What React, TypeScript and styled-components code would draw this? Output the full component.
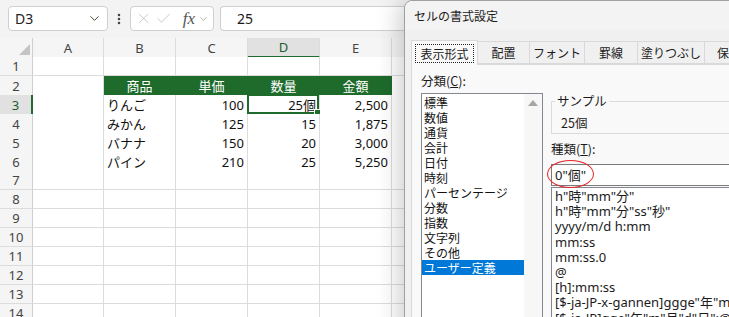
import React from "react";
import styled, { createGlobalStyle } from "styled-components";
import { ChevronDown, EllipsisVertical, X, Check } from "lucide-react";

const GREEN = "#1e6b2c";
const GRID = "#dcdcdc";
const COLS = "33px 71px 72px 72px 72px 72px 72px 72px";

const GlobalStyle = createGlobalStyle`
  html, body { margin: 0; padding: 0; }
  body {
    background: #f3f3f3;
    font-family: "Noto Sans CJK JP", "Noto Sans", sans-serif;
    color: #1b1b1b;
  }
  * { box-sizing: border-box; }
`;

const Page = styled.div`
  position: relative;
  width: 729px;
  height: 317px;
  overflow: hidden;
  background: #f3f3f3;
`;

/* formula bar */
const FormulaBar = styled.div`
  display: flex;
  align-items: flex-start;
  height: 38px;
  padding: 6px 0 0 8px;
`;

const Field = styled.div`
  display: flex;
  align-items: center;
  height: 25px;
  background: #fff;
  border: 1px solid #cfcfcf;
  border-radius: 4px;
`;

const NameBox = styled(Field)`
  width: 100px;
  justify-content: space-between;
  padding: 0 5px 0 6px;
  font-family: "Noto Sans", sans-serif;
  font-size: 14px;
  color: #222;
`;

const Dots = styled.div`
  display: flex;
  justify-content: center;
  align-items: center;
  width: 22px;
  height: 25px;
  color: #444;
`;

const EditBox = styled(Field)`
  width: 84px;
  padding: 0 4px 0 4px;
  gap: 3px;
  color: #b8b8b8;
`;

const Fx = styled.span`
  font-family: "Liberation Serif", serif;
  font-style: italic;
  font-size: 17px;
  color: #555;
  margin-left: 7px;
`;

const FormulaInput = styled(Field)`
  flex: 1;
  margin-left: 6px;
  padding-left: 16px;
  font-family: "Noto Sans", sans-serif;
  font-size: 14px;
  border-right: none;
  border-radius: 4px 0 0 4px;
`;

/* sheet */
const Sheet = styled.div`
  display: flex;
  flex-direction: column;
`;

const Row = styled.div<{ $h: number }>`
  display: grid;
  grid-template-columns: ${COLS};
  height: ${(p) => p.$h}px;
`;

const HeadCell = styled.div<{ $sel?: boolean }>`
  display: flex;
  align-items: center;
  justify-content: center;
  font-family: "Noto Sans", sans-serif;
  font-size: 13px;
  color: ${(p) => (p.$sel ? "#1b5e2a" : "#444")};
  background: ${(p) => (p.$sel ? "#e1e1e1" : "#f5f5f5")};
  border-right: 1px solid ${GRID};
  border-bottom: ${(p) => (p.$sel ? `2px solid ${GREEN}` : `1px solid #cfcfcf`)};
`;

const RowHead = styled.div<{ $sel?: boolean }>`
  display: flex;
  align-items: center;
  justify-content: center;
  font-family: "Noto Sans", sans-serif;
  font-size: 13px;
  color: ${(p) => (p.$sel ? "#1b5e2a" : "#444")};
  background: ${(p) => (p.$sel ? "#e1e1e1" : "#f5f5f5")};
  border-bottom: 1px solid ${GRID};
  border-right: ${(p) => (p.$sel ? `2px solid ${GREEN}` : `1px solid #cfcfcf`)};
`;

const Corner = styled.div`
  display: flex;
  align-items: flex-end;
  justify-content: flex-end;
  padding: 0 2px 2px 0;
  background: #f5f5f5;
  border-right: 1px solid #cfcfcf;
  border-bottom: 1px solid #cfcfcf;
`;

const Cell = styled.div<{ $align?: "left" | "right" | "center"; $head?: boolean }>`
  position: relative;
  display: flex;
  align-items: center;
  justify-content: ${(p) =>
    p.$align === "right" ? "flex-end" : p.$align === "center" ? "center" : "flex-start"};
  padding: 0 3px;
  font-family: "Noto Sans", "Noto Sans CJK JP", sans-serif;
  font-size: 13px;
  white-space: nowrap;
  background: ${(p) => (p.$head ? GREEN : "#fff")};
  color: ${(p) => (p.$head ? "#fff" : "#111")};
  border-right: 1px solid ${(p) => (p.$head ? GREEN : GRID)};
  border-bottom: 1px solid ${(p) => (p.$head ? GREEN : GRID)};
`;

const Selection = styled.div`
  position: absolute;
  inset: -1px 0 0 -1px;
  border: 2px solid ${GREEN};
  pointer-events: none;
`;

const FillHandle = styled.div`
  position: absolute;
  right: -4px;
  bottom: -4px;
  width: 7px;
  height: 7px;
  background: ${GREEN};
  border: 1px solid #fff;
`;

/* dialog */
const Dialog = styled.div`
  position: absolute;
  left: 404px;
  top: 0;
  width: 360px;
  height: 380px;
  display: flex;
  flex-direction: column;
  background: #f0f0f0;
  border: 1px solid #a0a0a0;
  border-top-left-radius: 8px;
  box-shadow: -6px 0 22px rgba(0, 0, 0, 0.18);
  font-family: "Noto Sans CJK JP", sans-serif;
  font-size: 12px;
`;

const TitleBar = styled.div`
  flex-shrink: 0;
  display: flex;
  align-items: center;
  height: 29px;
  padding-left: 9px;
  background: #f3f3f3;
  border-top-left-radius: 8px;
`;

const TabStrip = styled.div`
  flex-shrink: 0;
  display: flex;
  align-items: flex-end;
  height: 34px;
  padding-left: 6px;
`;

const Tab = styled.div<{ $w: number; $active?: boolean }>`
  display: flex;
  align-items: center;
  justify-content: center;
  width: ${(p) => p.$w}px;
  height: ${(p) => (p.$active ? 25 : 23)}px;
  margin-bottom: ${(p) => (p.$active ? -1 : 0)}px;
  position: relative;
  z-index: ${(p) => (p.$active ? 1 : 0)};
  background: ${(p) => (p.$active ? "#f9f9f9" : "#f0f0f0")};
  border: 1px solid #d9d9d9;
  border-bottom: ${(p) => (p.$active ? "none" : "1px solid #d9d9d9")};
  margin-left: ${(p) => (p.$active ? 0 : -1)}px;
  white-space: nowrap;
`;

const FocusText = styled.span`
  padding: 0 4px;
  line-height: 17px;
  outline: 1px dotted #222;
`;

const Panel = styled.div`
  flex: 1;
  display: flex;
  margin-left: 6px;
  padding: 7px 0 0 9px;
  background: #f9f9f9;
  border: 1px solid #d9d9d9;
`;

const LeftCol = styled.div`
  display: flex;
  flex-direction: column;
  width: 122px;
`;

const RightCol = styled.div`
  display: flex;
  flex-direction: column;
  margin-left: 8px;
  width: 200px;
`;

const Label = styled.div<{ $gap?: number }>`
  line-height: 17px;
  height: 17px;
  font-size: 12.5px;
  margin-top: ${(p) => p.$gap ?? 0}px;
`;

const ListBox = styled.div`
  display: flex;
  margin-top: 4px;
  height: 240px;
  background: #fff;
  border: 1px solid #828790;
`;

const Items = styled.div`
  flex: 1;
  padding: 1px 0 0 0;
`;

const Item = styled.div<{ $sel?: boolean }>`
  height: 15px;
  line-height: 15px;
  padding-left: 2px;
  font-size: 12px;
  white-space: nowrap;
  background: ${(p) => (p.$sel ? "#0078d7" : "transparent")};
  color: ${(p) => (p.$sel ? "#fff" : "#111")};
`;

const ScrollTrack = styled.div`
  width: 18px;
  display: flex;
  justify-content: center;
  padding-top: 6px;
  background: #f7f7f7;
`;

const Group = styled.fieldset`
  margin: 21px 0 0 0;
  padding: 0 0 0 3px;
  height: 41px;
  border: 1px solid #dcdcdc;
`;

const Legend = styled.legend`
  padding: 0 2px;
  line-height: 16px;
  font-size: 12.5px;
`;

const Sample = styled.div`
  padding: 3px 0 0 6px;
  line-height: 22px;
  font-size: 12.5px;
`;

const InputWrap = styled.div`
  position: relative;
  margin-top: 7px;
`;

const TextInput = styled.div`
  height: 22px;
  line-height: 20px;
  padding-left: 3px;
  background: #fff;
  border: 1px solid #7a7a7a;
  font-family: "Noto Sans", "Noto Sans CJK JP", sans-serif;
  font-size: 13px;
`;

const RedRing = styled.div`
  position: absolute;
  left: -4px;
  top: -4px;
  width: 47px;
  height: 28px;
  border: 1.5px solid #e8262a;
  border-radius: 50%;
`;

const FormatList = styled.div`
  margin-top: 1px;
  height: 160px;
  padding: 1px 0 0 3px;
  background: #fff;
  border: 1px solid #828790;
  font-family: "Noto Sans", "Noto Sans CJK JP", sans-serif;
`;

const FormatItem = styled.div`
  height: 15.2px;
  line-height: 15px;
  font-size: 13px;
  white-space: nowrap;
`;

const letters = ["A", "B", "C", "D", "E", "F", "G"];

type CellData = { v: string; a?: "left" | "right" | "center" };

const data: (CellData[] | null)[] = [
  null,
  [
    { v: "商品", a: "center" },
    { v: "単価", a: "center" },
    { v: "数量", a: "center" },
    { v: "金額", a: "center" },
  ],
  [{ v: "りんご" }, { v: "100", a: "right" }, { v: "25個", a: "right" }, { v: "2,500", a: "right" }],
  [{ v: "みかん" }, { v: "125", a: "right" }, { v: "15", a: "right" }, { v: "1,875", a: "right" }],
  [{ v: "バナナ" }, { v: "150", a: "right" }, { v: "20", a: "right" }, { v: "3,000", a: "right" }],
  [{ v: "パイン" }, { v: "210", a: "right" }, { v: "25", a: "right" }, { v: "5,250", a: "right" }],
];

const categories = [
  "標準",
  "数値",
  "通貨",
  "会計",
  "日付",
  "時刻",
  "パーセンテージ",
  "分数",
  "指数",
  "文字列",
  "その他",
  "ユーザー定義",
];

const formats = [
  'h"時"mm"分"',
  'h"時"mm"分"ss"秒"',
  "yyyy/m/d h:mm",
  "mm:ss",
  "mm:ss.0",
  "@",
  "[h]:mm:ss",
  '[$-ja-JP-x-gannen]ggge"年"m"月"d"日"',
  '[$-ja-JP]gge"年"m"月"d"日";@',
];

const tabs = [
  { label: "表示形式", w: 67 },
  { label: "配置", w: 53 },
  { label: "フォント", w: 56 },
  { label: "罫線", w: 54 },
  { label: "塗りつぶし", w: 68 },
  { label: "保護", w: 50 },
];

const SheetGrid = () => (
  <Sheet>
    <Row $h={19}>
      <Corner>
        <svg width="11" height="11" viewBox="0 0 11 11">
          <polygon points="11,0 11,11 0,11" fill="#c4c4c4" />
        </svg>
      </Corner>
      {letters.map((l) => (
        <HeadCell key={l} $sel={l === "D"}>
          {l}
        </HeadCell>
      ))}
    </Row>
    {Array.from({ length: 14 }, (_, r) => {
      const rowData = data[r];
      const isHead = r === 1;
      return (
        <Row $h={19} key={r}>
          <RowHead $sel={r === 2}>{r + 1}</RowHead>
          {letters.map((l, c) => {
            const d = rowData && c >= 1 && c <= 4 ? rowData[c - 1] : undefined;
            const selected = r === 2 && l === "D";
            return (
              <Cell key={l} $align={d?.a} $head={isHead && c >= 1 && c <= 4}>
                {d?.v}
                {selected && (
                  <Selection>
                    <FillHandle />
                  </Selection>
                )}
              </Cell>
            );
          })}
        </Row>
      );
    })}
  </Sheet>
);

const FormatDialog = () => (
  <Dialog>
    <TitleBar>セルの書式設定</TitleBar>
    <TabStrip>
      {tabs.map((t, i) => (
        <Tab key={t.label} $w={t.w} $active={i === 0}>
          {i === 0 ? <FocusText>{t.label}</FocusText> : t.label}
        </Tab>
      ))}
    </TabStrip>
    <Panel>
      <LeftCol>
        <Label>
          分類(<u>C</u>):
        </Label>
        <ListBox>
          <Items>
            {categories.map((c) => (
              <Item key={c} $sel={c === "ユーザー定義"}>
                {c}
              </Item>
            ))}
          </Items>
          <ScrollTrack>
            <svg width="10" height="6" viewBox="0 0 10 6">
              <polygon points="5,0 10,6 0,6" fill="#a6a6a6" />
            </svg>
          </ScrollTrack>
        </ListBox>
      </LeftCol>
      <RightCol>
        <Group>
          <Legend>サンプル</Legend>
          <Sample>25個</Sample>
        </Group>
        <Label $gap={6}>
          種類(<u>T</u>):
        </Label>
        <InputWrap>
          <TextInput>0"個"</TextInput>
          <RedRing />
        </InputWrap>
        <FormatList>
          {formats.map((f) => (
            <FormatItem key={f}>{f}</FormatItem>
          ))}
        </FormatList>
      </RightCol>
    </Panel>
  </Dialog>
);

const App: React.FC = () => (
  <>
    <GlobalStyle />
    <Page>
      <FormulaBar>
        <NameBox>
          D3
          <ChevronDown size={15} strokeWidth={1.6} color="#4a4a2a" />
        </NameBox>
        <Dots>
          <EllipsisVertical size={14} strokeWidth={2.4} />
        </Dots>
        <EditBox>
          <X size={19} strokeWidth={1} />
          <Check size={19} strokeWidth={1} />
          <Fx>fx</Fx>
          <ChevronDown size={12} strokeWidth={1.4} color="#888" />
        </EditBox>
        <FormulaInput>25</FormulaInput>
      </FormulaBar>
      <SheetGrid />
      <FormatDialog />
    </Page>
  </>
);

export default App;
